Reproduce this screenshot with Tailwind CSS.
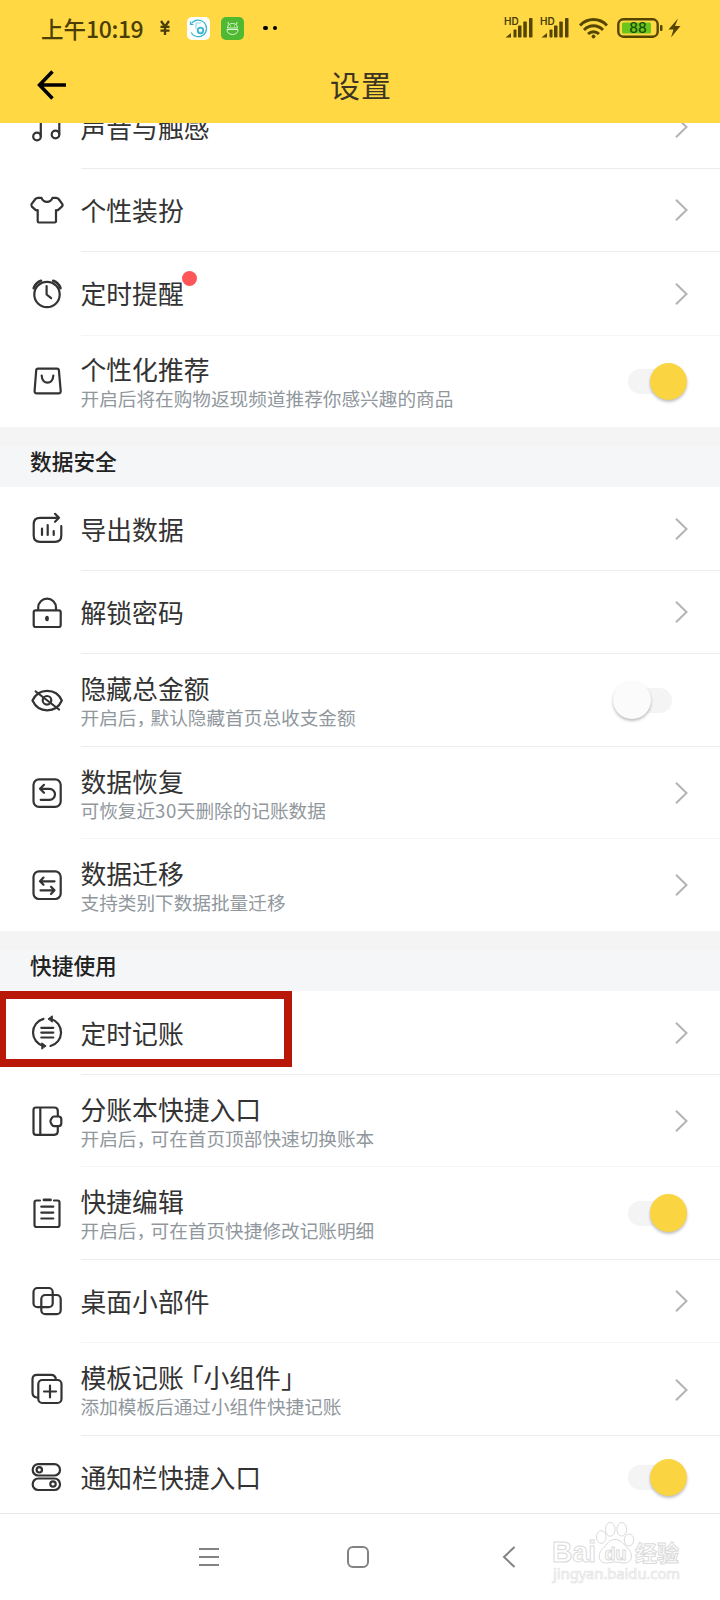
<!DOCTYPE html>
<html lang="zh-CN">
<head>
<meta charset="utf-8">
<title>设置</title>
<script src="https://cdn.jsdelivr.net/npm/@tailwindcss/browser@4"></script>
</head>
<body class="w-[720px] h-[1600px] overflow-hidden bg-white flex flex-col font-['Noto_Sans_CJK_SC',sans-serif] text-[#333]">
<svg width="0" height="0" class="hidden">
  <symbol id="chev" viewBox="0 0 14 24"><path d="M1 1.800 11.500 12 1 22.200" fill="none" stroke="#b3b3b3" stroke-width="2"/></symbol>
  <symbol id="signal" viewBox="0 0 30 22"><g fill="#544600"><path d="M.5 20.500 6 16v4.500z"/><rect x="8.500" y="12.500" width="3" height="8" rx=".8"/><rect x="13" y="8.500" width="3.500" height="12" rx=".8"/><rect x="18.300" y="4.500" width="3.500" height="16" rx=".8"/><rect x="24" y="1" width="3.500" height="19.500" rx=".8"/></g></symbol>
</svg>

<header class="h-[123px] shrink-0 bg-[#ffd843] flex flex-col">
  <div class="h-[56px] flex items-center pl-[41px] text-[#4a3d05]">
    <div class="w-[103px] text-[22.5px] leading-[30px] font-medium whitespace-nowrap"><span>上午</span><span class="text-[23px] tracking-[-0.400px]">10:19</span></div>
    <svg class="ml-[15px] w-[12px] h-[16px]" viewBox="0 0 12 16" fill="none" stroke="#4a3d05" stroke-width="2.300"><path d="M2 1 6 6.500 10 1M6 6v9M1.500 6.800h9M1.500 10.600h9"/></svg>
    <svg class="ml-[16px] w-[23px] h-[23px]" viewBox="0 0 23 23" fill="none"><rect width="23" height="23" rx="5" fill="#fff"/><g stroke="#39b5cf" stroke-width="1.200"><path d="M4.500 6.500A8.300 8.300 0 1 1 4 15.500M3.500 4.500v3h3"/><path d="M9 6h5M9 6v6M10 15h5" stroke="#9adbe8"/><circle cx="13.500" cy="13.500" r="2.800" stroke-width="1.800"/></g></svg>
    <svg class="ml-[11px] w-[23px] h-[23px]" viewBox="0 0 23 23" fill="none"><rect width="23" height="23" rx="5" fill="#4fb932"/><g stroke="#d9f5cf" stroke-width="1"><path d="M6.500 11c0-3 2-4.500 5-4.500s5 1.500 5 4.500zM6 12.500h11c0 3-2 5-5.500 5S6 15.500 6 12.500zM7.500 7.500 7 5M15.500 7.500 16 5"/><path d="M9.500 8.500v1M13.500 8.500v1"/></g></svg>
    <div class="ml-[19px] flex gap-[5px]"><i class="size-[4.500px] rounded-full bg-black"></i><i class="size-[4.500px] rounded-full bg-black"></i></div>
    <div class="ml-auto mr-[39px] flex items-center">
      <div class="relative w-[36px] h-[22px]"><svg class="w-[30px] h-[22px]"><use href="#signal"/></svg><span class="absolute -left-px top-0 text-[10px] leading-[8px] font-semibold font-['Inter',sans-serif]">HD</span></div>
      <div class="relative w-[38px] h-[22px]"><svg class="w-[30px] h-[22px]"><use href="#signal"/></svg><span class="absolute -left-px top-0 text-[10px] leading-[8px] font-semibold font-['Inter',sans-serif]">HD</span></div>
      <svg class="w-[29px] h-[21px]" viewBox="0 0 29 21" fill="none" stroke="#544600" stroke-width="2.900"><path d="M1 7.500C8.500-.5 20.500-.5 28 7.500M5 12c5.500-5.600 13.500-5.600 19 0M9 16c3.200-3.100 7.800-3.100 11 0"/><circle cx="14.500" cy="18.500" r="1.500" fill="#544600" stroke-width="1"/></svg>
      <svg class="ml-[9px] w-[47px] h-[20px]" viewBox="0 0 47 20"><rect x="1.300" y="1.300" width="39.400" height="17.400" rx="5" fill="none" stroke="#544600" stroke-width="2.400"/><rect x="5" y="4.500" width="29" height="11" rx="1.500" fill="#69c71b"/><rect x="43" y="7" width="2.500" height="6" rx="1" fill="#544600"/><text x="21" y="15.200" text-anchor="middle" font-family="Inter" font-size="14" font-weight="500" fill="#1e4a05">88</text></svg>
      <svg class="ml-[4px] w-[13px] h-[20px]" viewBox="0 0 13 20"><path d="M10 .5.500 11.500h5L3 19.500l9.500-11.500H7z" fill="#544600"/></svg>
    </div>
  </div>
  <div class="h-[58px] flex items-center">
    <svg class="ml-[36px] w-[31px] h-[30px]" viewBox="0 0 31 30" fill="none" stroke="#000" stroke-width="3.500"><path d="M16.500 1.500 3.500 15l13 13.500M3 15h27"/></svg>
    <h1 class="ml-[263px] mb-[3px] text-[30px] leading-[40px] tracking-[1px] text-[#3d3523]">设置</h1>
  </div>
</header>

<main class="h-[1390px] shrink-0 overflow-hidden">
  <section class="-mt-[38px]">
    <div class="h-[84px] flex items-center pl-[27px]">
      <svg class="size-[40px]" viewBox="0 0 40 40" fill="none" stroke="#333" stroke-width="2.200"><circle cx="10" cy="29.500" r="3.800"/><circle cx="28.500" cy="27.500" r="3.800"/><path d="M13.800 29.500V10h4M32.300 27.500V8h-4"/></svg>
      <div class="ml-[13.500px] h-full grow flex items-center border-b border-[#ececec]"><span class="text-[25.800px] pt-[2px]">声音与触感</span><svg class="ml-auto mr-[31px] mt-[1px] w-[14px] h-[24px]"><use href="#chev"/></svg></div>
    </div>
    <div class="h-[83px] flex items-center pl-[27px]">
      <svg class="size-[40px] mb-[2px]" viewBox="0 0 40 40" fill="none" stroke="#333" stroke-width="2.200" stroke-linejoin="round"><path d="M14.500 7.800c1 2.600 2.800 4 5.500 4s4.500-1.400 5.500-4h3.500q1.600 0 2.600 1.200l3.600 4.800q1 1.600-.4 2.800l-3.300 3q-1 .9-2.500.6v11q0 1.300-1.300 1.300H12q-1.300 0-1.300-1.300v-11q-1.500.3-2.500-.6l-3.300-3q-1.200-1.200-.2-2.800L8.400 9q1-1.200 2.600-1.200z"/></svg>
      <div class="ml-[13.500px] h-full grow flex items-center border-b border-[#ececec]"><span class="text-[25.800px]">个性装扮</span><svg class="ml-auto mr-[31px] w-[14px] h-[24px]"><use href="#chev"/></svg></div>
    </div>
    <div class="h-[84px] flex items-center pl-[27px]">
      <svg class="size-[40px] mb-[2px]" viewBox="0 0 40 40" fill="none" stroke="#333" stroke-width="2.200" stroke-linecap="round" stroke-linejoin="round"><circle cx="20" cy="21.500" r="12.700"/><path d="M19.600 13v8.500l4.500 3.700"/><path d="M6.700 15.200Q8.500 9.800 14 7.800M33.500 15.200Q31.700 9.800 26.200 7.800" stroke-width="2.600"/></svg>
      <div class="ml-[13.500px] h-full grow flex items-center border-b border-[#f4f4f4]"><span class="relative text-[25.800px]">定时提醒<i class="absolute -right-[13px] -top-[3.500px] size-[15px] rounded-full bg-[#fe5558]"></i></span><svg class="ml-auto mr-[31px] w-[14px] h-[24px]"><use href="#chev"/></svg></div>
    </div>
    <div class="h-[91px] flex items-center pl-[27px]">
      <svg class="size-[40px] mb-[2px]" viewBox="0 0 40 40" fill="none" stroke="#333" stroke-width="2.200" stroke-linecap="round"><path d="M11 7.700h19q1.700 0 1.900 1.700l1.800 20.500q.2 2.400-2.200 2.400H9.800q-2.400 0-2.200-2.400L9.200 9.400q.2-1.700 1.800-1.700zM14.700 14.500c.3 9.600 11.300 9.600 11.600 0"/></svg>
      <div class="ml-[13.500px] h-full grow flex items-center">
        <div class="pt-[2px]"><p class="text-[25.800px] leading-[31px]">个性化推荐</p><p class="text-[18.650px] leading-[28px] text-[#90979d]">开启后将在购物返现频道推荐你感兴趣的商品</p></div>
        <div class="ml-auto mr-[33px] w-[59px] h-[38px] flex items-center"><div class="w-full h-[25px] rounded-full bg-[#f4f4f4] flex items-center justify-end"><i class="size-[37.500px] shrink-0 rounded-full bg-[#fad541] shadow-[0_2px_3px_rgba(0,0,0,0.25)]"></i></div></div>
      </div>
    </div>
  </section>

  <section>
    <div class="h-[19px] bg-[#f4f4f4]"></div>
    <h2 class="h-[41px] bg-[#f5f6f8] pl-[30px] pb-[11px] flex items-center text-[21.700px] font-medium text-[#222]">数据安全</h2>
    <div class="h-[84px] flex items-center pl-[27px]">
      <svg class="size-[40px] mb-[2px]" viewBox="0 0 40 40" fill="none" stroke="#333" stroke-width="2.200" stroke-linecap="round" stroke-linejoin="round"><path d="M31.500 9.800H13q-6.300 0-6.300 6.300v11.400q0 6.300 6.300 6.300h15q6.300 0 6.300-6.300v-9.300M28 5.800l4 4-4 4M15 20.500v6.500M20.700 17v10M26.700 23v4"/></svg>
      <div class="ml-[13.500px] h-full grow flex items-center border-b border-[#ececec]"><span class="text-[25.800px] pt-px">导出数据</span><svg class="ml-auto mr-[31px] w-[14px] h-[24px]"><use href="#chev"/></svg></div>
    </div>
    <div class="h-[83px] flex items-center pl-[27px]">
      <svg class="size-[40px] mb-[2px]" viewBox="0 0 40 40" fill="none" stroke="#333" stroke-width="2.200"><rect x="6.700" y="18.300" width="27" height="16.700" rx="2"/><path d="M11.200 18v-2.500a8.900 8.900 0 0 1 17.800 0V18"/><ellipse cx="20" cy="26.500" rx="1.900" ry="2.800" fill="#333" stroke="none"/></svg>
      <div class="ml-[13.500px] h-full grow flex items-center border-b border-[#ececec]"><span class="text-[25.800px]">解锁密码</span><svg class="ml-auto mr-[31px] w-[14px] h-[24px]"><use href="#chev"/></svg></div>
    </div>
    <div class="h-[93px] flex items-center pl-[27px]">
      <svg class="size-[40px] mb-[2px]" viewBox="0 0 40 40" fill="none" stroke="#333" stroke-width="2.200" stroke-linecap="round"><path d="M5.500 20.500C8.500 14 14 10.800 20.200 10.800S32 14 34.800 20.500C32 27 26.500 30.300 20.200 30.300S8.500 27 5.500 20.500z"/><circle cx="20" cy="20.300" r="4.300"/><path d="M8.700 11.500 32 29.500"/></svg>
      <div class="ml-[13.500px] h-full grow flex items-center border-b border-[#ececec]">
        <div class="pt-[2px]"><p class="text-[25.800px] leading-[31px]">隐藏总金额</p><p class="text-[18.650px] leading-[28px] text-[#90979d]">开启后<span class="-mr-[4.500px]">，</span>默认隐藏首页总收支金额</p></div>
        <div class="ml-auto mr-[48px] w-[59px] h-[38px] flex items-center"><div class="w-full h-[25px] rounded-full bg-[#f4f4f4] flex items-center"><i class="size-[37.500px] shrink-0 rounded-full bg-[#fbfbfb] shadow-[0_2px_3px_rgba(0,0,0,0.25)]"></i></div></div>
      </div>
    </div>
    <div class="h-[92px] flex items-center pl-[27px]">
      <svg class="size-[40px]" viewBox="0 0 40 40" fill="none" stroke="#333" stroke-width="2.200" stroke-linecap="round" stroke-linejoin="round"><rect x="6.500" y="6.300" width="27.200" height="27.500" rx="5.500"/><path d="M17 11.800l-4 4 4 4M13.200 15.800h9.300a5.500 5.500 0 0 1 0 11h-8.800"/></svg>
      <div class="ml-[13.500px] h-full grow flex items-center border-b border-[#f4f4f4]">
        <div class="pt-[3px]"><p class="text-[25.800px] leading-[31px]">数据恢复</p><p class="text-[18.650px] leading-[28px] text-[#90979d]">可恢复近<span class="tracking-[0.500px]">30</span>天删除的记账数据</p></div>
        <svg class="ml-auto mr-[31px] w-[14px] h-[24px]"><use href="#chev"/></svg>
      </div>
    </div>
    <div class="h-[92px] flex items-center pl-[27px]">
      <svg class="size-[40px]" viewBox="0 0 40 40" fill="none" stroke="#333" stroke-width="2.200" stroke-linecap="round" stroke-linejoin="round"><rect x="6.500" y="6.300" width="27.200" height="27.700" rx="5.500"/><path d="M16.500 12.600 13 16.300l3.500 3.500M13.200 16.300h14.300M24 21.800l3.500 3.500L24 29M13.500 25.300h14"/></svg>
      <div class="ml-[13.500px] h-full grow flex items-center">
        <div class="pt-[3px]"><p class="text-[25.800px] leading-[31px]">数据迁移</p><p class="text-[18.650px] leading-[28px] text-[#90979d]">支持类别下数据批量迁移</p></div>
        <svg class="ml-auto mr-[31px] w-[14px] h-[24px]"><use href="#chev"/></svg>
      </div>
    </div>
  </section>

  <section>
    <div class="h-[19px] bg-[#f4f4f4]"></div>
    <h2 class="h-[41px] bg-[#f5f6f8] pl-[30px] pb-[11px] flex items-center text-[21.700px] font-medium text-[#222]">快捷使用</h2>
    <div class="relative h-[84px] flex items-center pl-[27px]">
      <div class="absolute left-0 top-0 w-[292px] h-[76px] border-[#b91707] border-t-[8px] border-b-[8px] border-l-[6px] border-r-[8px]"></div>
      <svg class="size-[40px] mb-[2px]" viewBox="0 0 40 40" fill="none" stroke="#333" stroke-width="2.200" stroke-linecap="round"><path d="M16.500 6.900a14 14 0 0 0 0 27.100M23.500 34A14 14 0 0 0 24 7M14.300 15.800h12M14.300 20.600h12M14.300 25.500h12"/><path d="M21.300 6.800l4-3v6zM18.800 33.800l-4-3v6z" fill="#333" stroke-width="1" stroke-linejoin="round"/></svg>
      <div class="ml-[13.500px] h-full grow flex items-center border-b border-[#ececec]"><span class="text-[25.800px] pt-px">定时记账</span><svg class="ml-auto mr-[31px] w-[14px] h-[24px]"><use href="#chev"/></svg></div>
    </div>
    <div class="h-[92px] flex items-center pl-[27px]">
      <svg class="size-[40px] mb-px" viewBox="0 0 40 40" fill="none" stroke="#333" stroke-width="2.200" stroke-linejoin="round"><path d="M30.800 15.500V10q0-3.500-3.500-3.500H9q-2.500 0-2.500 2.500v22.300q0 2.500 2.500 2.500h18.300q3.500 0 3.500-3.500V25M13.300 6.500v27.300"/><path d="M27 15.500h4.500q2.800 0 2.800 2.800v4q0 2.800-2.800 2.800H27q-1.300 0-2-1.200l-1.300-2.400q-.6-1.200 0-2.400L25 16.700q.7-1.200 2-1.200z"/></svg>
      <div class="ml-[13.500px] h-full grow flex items-center border-b border-[#f4f4f4]">
        <div class="pt-[3px]"><p class="text-[25.800px] leading-[31px]">分账本快捷入口</p><p class="text-[18.650px] leading-[28px] text-[#90979d]">开启后<span class="-mr-[4.500px]">，</span>可在首页顶部快速切换账本</p></div>
        <svg class="ml-auto mr-[31px] w-[14px] h-[24px]"><use href="#chev"/></svg>
      </div>
    </div>
    <div class="h-[93px] flex items-center pl-[27px]">
      <svg class="size-[40px] mb-[2px]" viewBox="0 0 40 40" fill="none" stroke="#333" stroke-width="2.200" stroke-linecap="round"><path d="M13 7.500H9.500q-2 0-2 2V32q0 2 2 2h21q2 0 2-2V9.500q0-2-2-2H27M14.300 13.700h12M14.300 19.600h12M14.300 25.500h12"/><path d="M17 6.900h6.500" stroke-width="2.800"/></svg>
      <div class="ml-[13.500px] h-full grow flex items-center border-b border-[#ececec]">
        <div class="pt-[2px]"><p class="text-[25.800px] leading-[31px]">快捷编辑</p><p class="text-[18.650px] leading-[28px] text-[#90979d]">开启后<span class="-mr-[4.500px]">，</span>可在首页快捷修改记账明细</p></div>
        <div class="ml-auto mr-[33px] w-[59px] h-[38px] flex items-center"><div class="w-full h-[25px] rounded-full bg-[#f4f4f4] flex items-center justify-end"><i class="size-[37.500px] shrink-0 rounded-full bg-[#fad541] shadow-[0_2px_3px_rgba(0,0,0,0.25)]"></i></div></div>
      </div>
    </div>
    <div class="h-[83px] flex items-center pl-[27px]">
      <svg class="size-[40px] mb-px" viewBox="0 0 40 40" fill="none" stroke="#333" stroke-width="2.200"><rect x="6.500" y="7" width="19.200" height="19.200" rx="4"/><rect x="14.300" y="14" width="19.400" height="19.200" rx="4"/></svg>
      <div class="ml-[13.500px] h-full grow flex items-center border-b border-[#f4f4f4]"><span class="text-[25.800px]">桌面小部件</span><svg class="ml-auto mr-[31px] w-[14px] h-[24px]"><use href="#chev"/></svg></div>
    </div>
    <div class="h-[93px] flex items-center pl-[27px]">
      <svg class="size-[40px] mb-px" viewBox="0 0 40 40" fill="none" stroke="#333" stroke-width="2.200" stroke-linecap="round"><path d="M11 28.500H9.800q-4.300-.5-4.300-5V10.300q0-4.500 4.500-4.500h14q4.500 0 5 5"/><rect x="11.300" y="11" width="23.200" height="23" rx="4"/><path d="M17 22.500h12M23 16.500v12"/></svg>
      <div class="ml-[13.500px] h-full grow flex items-center border-b border-[#ececec]">
        <div class="pt-[3px]"><p class="text-[25.800px] leading-[31px]">模板记账<span class="-ml-[6px]">「</span>小组件<span>」</span></p><p class="text-[18.650px] leading-[28px] text-[#90979d]">添加模板后通过小组件快捷记账</p></div>
        <svg class="ml-auto mr-[31px] mt-px w-[14px] h-[24px]"><use href="#chev"/></svg>
      </div>
    </div>
    <div class="h-[83px] flex items-center pl-[27px]">
      <svg class="size-[40px] mb-px" viewBox="0 0 40 40" fill="none" stroke="#333" stroke-width="2.200"><rect x="5.700" y="7.200" width="27.300" height="11.300" rx="5.600"/><circle cx="12.300" cy="12.800" r="2.700"/><rect x="5.700" y="21.500" width="27.300" height="11.500" rx="5.600"/><circle cx="26" cy="27" r="2.700"/></svg>
      <div class="ml-[13.500px] h-full grow flex items-center"><span class="text-[25.800px]">通知栏快捷入口</span>
        <div class="ml-auto mr-[33px] w-[59px] h-[38px] flex items-center"><div class="w-full h-[25px] rounded-full bg-[#f4f4f4] flex items-center justify-end"><i class="size-[37.500px] shrink-0 rounded-full bg-[#fad541] shadow-[0_2px_3px_rgba(0,0,0,0.25)]"></i></div></div>
      </div>
    </div>
  </section>
</main>

<footer class="relative h-[87px] shrink-0 border-t border-[#e6e6e6] bg-white flex items-center">
  <svg class="ml-[199px] w-[20px] h-[20px]" viewBox="0 0 20 20" stroke="#828282" stroke-width="2"><path d="M0 2h20M0 10h20M0 18h20"/></svg>
  <svg class="ml-[128px] w-[22px] h-[22px]" viewBox="0 0 22 22" fill="none" stroke="#828282" stroke-width="2"><rect x="1" y="1" width="20" height="20" rx="5"/></svg>
  <svg class="ml-[133px] w-[14px] h-[22px]" viewBox="0 0 14 22" fill="none" stroke="#828282" stroke-width="2"><path d="M12.500 1 2 11l10.500 10"/></svg>
  <svg class="absolute left-[548px] top-[6px] w-[140px] h-[70px]" viewBox="0 0 140 70" fill="#fff" stroke="#dadada" stroke-width="1">
    <text x="4" y="42" font-family="Liberation Sans" font-weight="700" font-size="29" textLength="44" lengthAdjust="spacingAndGlyphs">Bai</text>
    <ellipse cx="53.300" cy="17" rx="4.800" ry="6.300"/><ellipse cx="62.300" cy="9.300" rx="4.800" ry="7"/><ellipse cx="73.700" cy="9.300" rx="4.800" ry="6.800"/><ellipse cx="81" cy="20" rx="4.800" ry="6"/>
    <path d="M67 19.500c-6 0-8 5-12 9-5 4-6 14 3 14.500 4 0 6-1 9-1s6 1 10 1c8-.5 8-10 3-14.500-4-4-7-9-13-9z"/>
    <text x="56.500" y="40" font-family="Liberation Sans" font-weight="700" font-size="19" textLength="22" lengthAdjust="spacingAndGlyphs">du</text>
    <text x="87" y="40.500" font-family="Noto Sans CJK SC" font-weight="700" font-size="22">经验</text>
    <text x="5" y="58.500" font-family="Noto Sans" font-size="14" stroke="#e3e3e3" stroke-width=".7" textLength="127" lengthAdjust="spacingAndGlyphs">jingyan.baidu.com</text>
  </svg>
</footer>
</body>
</html>
